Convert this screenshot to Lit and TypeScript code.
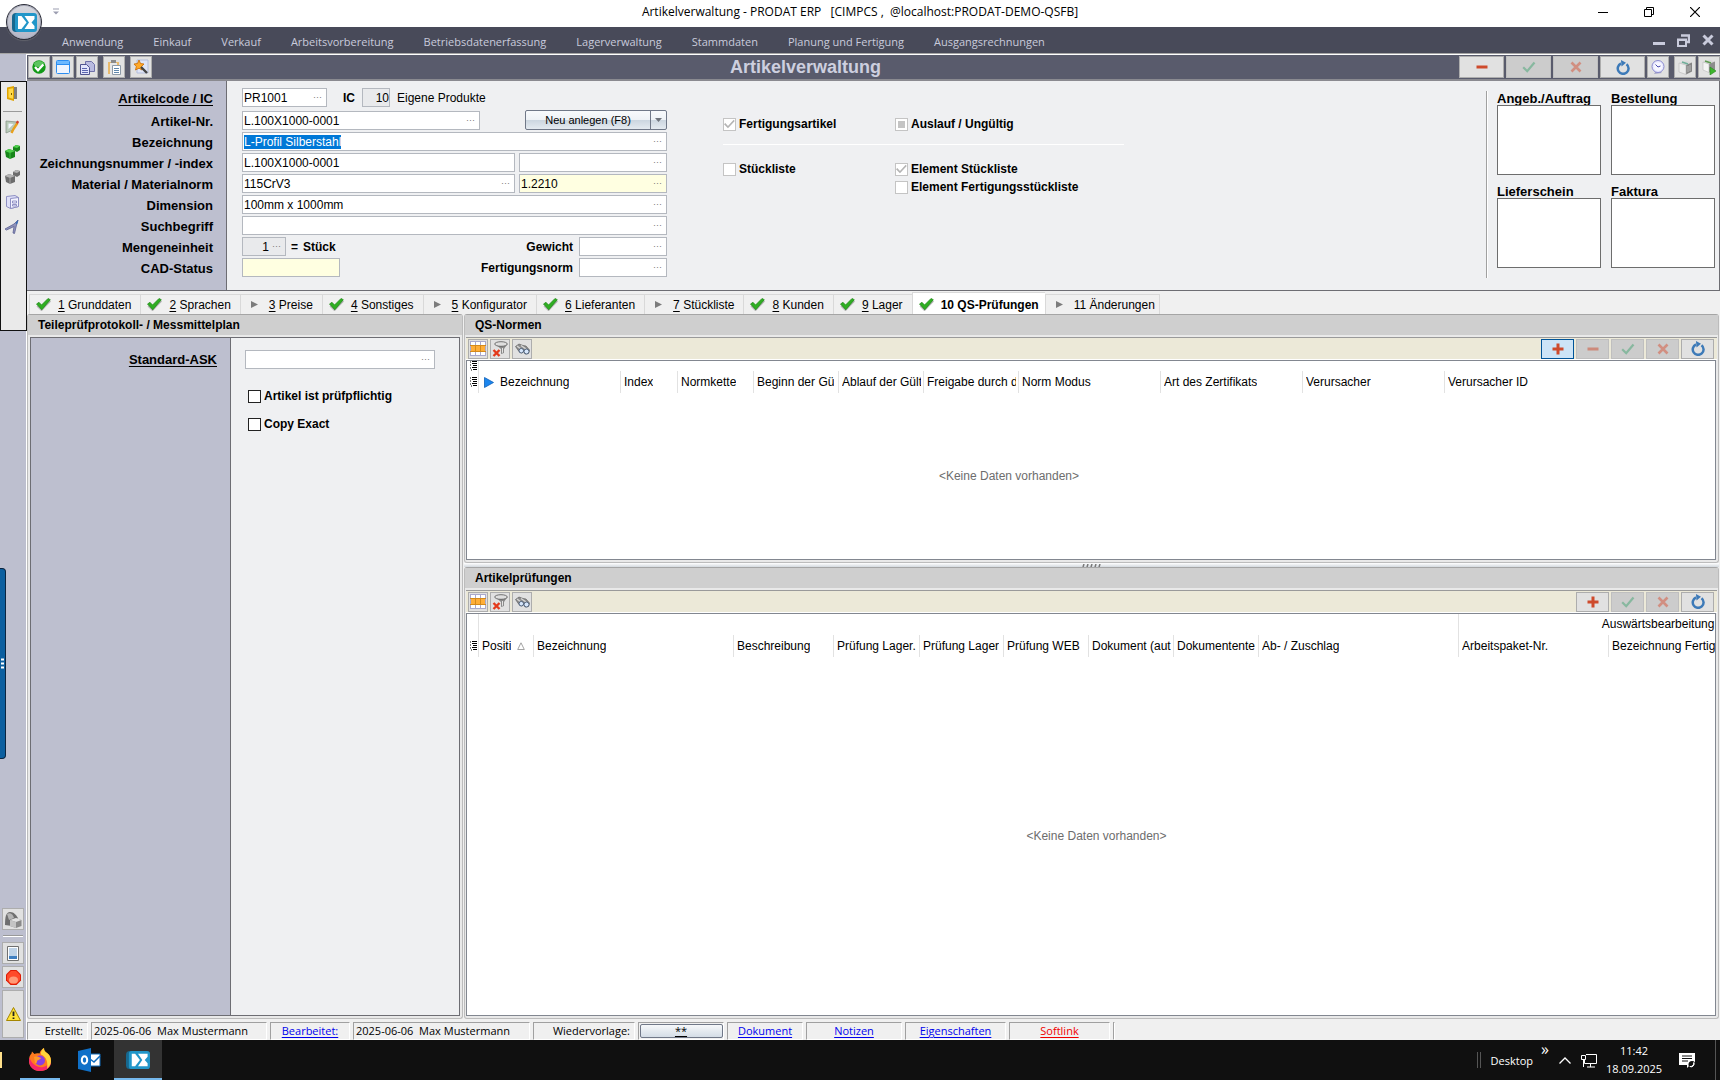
import { LitElement, html, css, svg, nothing } from "lit";
import { customElement, query } from "lit/decorators.js";
import { classMap } from "lit/directives/class-map.js";

const icon = (w: number, h: number, body: unknown, vw = w, vh = h) =>
  html`<svg class="icon" width=${w} height=${h} viewBox="0 0 ${vw} ${vh}" aria-hidden="true">${body}</svg>`;

const icons = {
  brand: (s: number) => icon(s, s, svg`
    <rect x="0" y="3" width="20" height="19" rx="4" fill="#17688f"/>
    <rect x="3" y="3" width="22" height="19" rx="3" fill="#2196c9"/>
    <path d="M6 6h3.500l5 6.500-5 6.500H6z" fill="#fff"/>
    <path d="M12.500 6H22.500v3L19.500 12.500l3 3.500v3h-10l4.500-6.500z" fill="#fff"/>`, 25, 25),
  qat: () => icon(6, 7, svg`<path d="M0 1h6" stroke="#9b9db0" stroke-width="1"/><path d="M0 3.500h6L3 6.500z" fill="#9b9db0"/>`),
  winMin: () => icon(10, 10, svg`<path d="M0 5.500h10" stroke="#000"/>`),
  winMax: () => icon(10, 10, svg`<path d="M.5 2.500h7v7h-7zM2.500 2.500v-2h7v7h-2" fill="none" stroke="#000"/>`),
  winClose: () => icon(10, 10, svg`<path d="M0 0l10 10M10 0L0 10" stroke="#000" stroke-width="1.200"/>`),
  mdiMin: () => icon(12, 12, svg`<path d="M0 9.500h12" stroke="#c9cbdc" stroke-width="3"/>`),
  mdiMax: () => icon(13, 13, svg`<path d="M1 6h8v6H1zM0 5.500h10" fill="none" stroke="#c9cbdc" stroke-width="2"/><path d="M4 1.500h9M12 1v7h-2" fill="none" stroke="#c9cbdc" stroke-width="2.500"/>`),
  mdiClose: () => icon(12, 12, svg`<path d="M1.500 1.500l9 9M10.500 1.500l-9 9" stroke="#c9cbdc" stroke-width="3"/>`),
  ok: () => icon(14, 14, svg`<circle cx="7" cy="7" r="6.700" fill="#129a17"/><ellipse cx="7" cy="4" rx="5" ry="3" fill="#5cc45e"/><path d="M3 7l3 3.200L11.300 4.500" fill="none" stroke="#fff" stroke-width="2.300"/>`),
  win: () => icon(14, 14, svg`<rect x=".5" y=".5" width="13" height="13" rx="1" fill="#eef4ff" stroke="#2b8cf0"/><path d="M1 2.500h12" stroke="#6cb8ff" stroke-width="3"/><path d="M1 4.500h12" stroke="#2b8cf0"/>`),
  copy: () => icon(15, 15, svg`<path d="M5.500 1.500h6l3 3v7h-9z" fill="#b9bbe0" stroke="#6f71a8"/><path d="M.5 4.500h6l3 3v7h-9z" fill="#e3e6fb" stroke="#51558f"/><path d="M2 8.500h5M2 10.500h6M2 12.500h6" stroke="#5c66b0"/>`),
  paste: () => icon(15, 16, svg`<path d="M1 3h11v12H1z" fill="#e8b96c"/><path d="M3 4h7v12H3z" fill="#e7e7e7"/><path d="M4 1h5v3H4z" fill="#8a8a8a"/><path d="M5.500 6.500h8v9h-8z" fill="#fff" stroke="#8d9aa8"/><path d="M7 9.500h5M7 11.500h5M7 13.500h5" stroke="#5f87ad"/>`),
  wizard: () => icon(16, 16, svg`<path d="M4 1h11v13H4z" fill="#dfe5f7" stroke="#b3bddb"/><path d="M6 1l1.500 3.500L11 5 8.500 7.500 9 11 6 9.200 2.500 11l.8-3.500L1 5l3.500-.5z" fill="#ffa928" stroke="#c96a00" stroke-width=".8"/><path d="M8 8l6 6" stroke="#444" stroke-width="2.400"/>`),
  plus: () => icon(12, 12, svg`<path d="M.5 6h11M6 .5v11" stroke="#ce4a2c" stroke-width="3"/>`),
  minus: () => icon(12, 12, svg`<path d="M.5 6h11" stroke="#ce4a2c" stroke-width="3"/>`),
  check: () => icon(14, 12, svg`<path d="M1.200 6.200l4 4L12.500 1.500" fill="none" stroke="#45a573" stroke-width="2.200"/>`),
  cross: () => icon(12, 12, svg`<path d="M1.500 1.500l9 9M10.500 1.500l-9 9" stroke="#d65339" stroke-width="2.600"/>`),
  refresh: () => icon(14, 15, svg`<path d="M10.500 4.200A5.400 5.400 0 1 1 5 3.500" fill="none" stroke="#3d7ab8" stroke-width="2.500"/><path d="M5 0l5 2.800L5.500 6.500z" fill="#3d7ab8"/>`),
  clock: () => icon(14, 15, svg`<path d="M3 14l3-5 5 4z" fill="#a5a5c8"/><circle cx="7" cy="6.500" r="6" fill="#e9e9ff" stroke="#8c8ccf"/><circle cx="7" cy="6.500" r="4" fill="#f8f8ff"/><path d="M7 7L4.500 4.500M7 7l2.500-1" stroke="#4a4ab0"/>`),
  cube: () => icon(15, 15, svg`<path d="M1 3l7-2.500 6 2v9L8 14.500 1 12z" fill="#d9d9d9"/><path d="M8 5l6-2.500v9L8 14.500z" fill="#858585"/><path d="M1 3l7 2v9.500L1 12z" fill="#ececec" stroke="#bbb" stroke-width=".6"/><path d="M4 2l6 2" stroke="#6fae9a" stroke-width="1.500"/><path d="M10 6v6M12 5v6" stroke="#b9b9b9"/>`),
  cubeGo: () => icon(16, 16, svg`<path d="M2 3l6-2.500 6 2v8L8 13.500 2 11z" fill="#d9d9d9"/><path d="M8 5l6-2.500v8.500L8 13.500z" fill="#8c8c8c"/><path d="M2 3l6 2v8.500L2 11z" fill="#f4f4f4" stroke="#bbb" stroke-width=".6"/><path d="M4 2l6 2" stroke="#5d9a50" stroke-width="1.500"/><path d="M9 8l6 4-6 4z" fill="#3db52d" stroke="#26861b" stroke-width=".6"/>`),
  tick: () => icon(15, 13, svg`<path d="M1.500 7.500l4 4L14 2.500" fill="none" stroke="#9a9a9a" stroke-width="2.600" opacity=".7"/><path d="M.5 6L3 4.300 5.500 7 12 .5l2.300 1.200L5.800 11.800z" fill="#2fae22" stroke="#1d8614" stroke-width=".7"/>`),
  arrow: () => icon(15, 9, svg`<path d="M4 1l7 3.500L4 8z" fill="#7c7c7c"/>`),
  door: () => icon(12, 15, svg`<path d="M1 1.500L8 0v15l-7-2z" fill="#e0a400"/><path d="M2.500 3L7 2.200v10.500l-4.500-1.200z" fill="#ffd94a"/><path d="M8 1h3v12H8z" fill="#7e7e7e"/><path d="M5.500 7v2" stroke="#7b5b00"/>`),
  edit: () => icon(14, 14, svg`<path d="M1 1l11 1-4 8-7 3z" fill="#b9cbb9" stroke="#8a988a" stroke-width=".8"/><path d="M3.500 3.500l5 .5-5 5z" fill="#f2f5ff"/><path d="M12.500 3L8.500 9l-2 4" stroke="#e8a11c" stroke-width="2.400" fill="none"/><path d="M11.500 1.500l2 1.500" stroke="#d5432c" stroke-width="2.500"/>`),
  blocks: (a: string, b: string) => icon(15, 14, svg`<path d="M0 6l4-2 6 2v6l-5 2-4-2z" fill=${a}/><path d="M0 6l4-2 6 2-5 2z" fill=${b}/><path d="M8 2l3-2 4 1v4l-3 2-4-2z" fill=${a}/><path d="M8 2l3-2 4 1-3 2z" fill=${b}/><path d="M5 8v6" stroke=${b} stroke-width=".8"/>`),
  safe: () => icon(13, 14, svg`<path d="M.5 1.500L9 .5l3.500 2v9l-8 2-4-2z" fill="#dfe0f8" stroke="#8687bd" stroke-width=".9"/><path d="M4.500 3.500l8-1v9l-8 2z" fill="#f3f3ff" stroke="#8687bd" stroke-width=".9"/><path d="M6.500 6h4v2h-4zM6.500 9.500h4v1.500h-4z" fill="none" stroke="#7b7cb8" stroke-width=".8"/>`),
  compass: () => icon(14, 14, svg`<path d="M13 0L9 4 0 9l1.500 1L9 6.500 8 13l1.500.5L11.500 5z" fill="#8f93bb" stroke="#595e92" stroke-width=".8"/><path d="M13.500 0l-3 3 1.500 1.500z" fill="#2f6bb8"/>`),
  shapes: () => icon(18, 17, svg`<path d="M1 14C1 6 2 1 6 1s6 3 8 6l-6 8z" fill="#6f6f6f"/><path d="M3 3c3-2 6 0 7 4L5 9z" fill="#b5b5b5"/><path d="M6 9l6-2 5.500 2v6L12 17l-6-2z" fill="#8a8a8a"/><path d="M6 9l6-2 5.500 2-5.500 2z" fill="#e2e2e2"/><path d="M6 9l6 2v6l-6-2z" fill="#c4c4c4"/>`),
  list: () => icon(12, 15, svg`<path d="M.5.5h11v14H.5z" fill="#fff" stroke="#707070"/><path d="M2 3h8M2 5h8M2 7h8M2 9h8" stroke="#7fa6cf"/><path d="M2 10h8v3H2z" fill="#3f7fc0"/>`),
  stop: () => icon(15, 15, svg`<path d="M4.500 0h6L15 4.500v6L10.500 15h-6L0 10.500v-6z" fill="#dd1c05"/><path d="M5 1h5l4 4v5l-4 4H5l-4-4V5z" fill="#ff4a2a"/><ellipse cx="7.500" cy="10" rx="4.500" ry="3.500" fill="#ff9a78"/>`),
  warn: () => icon(15, 14, svg`<path d="M7.500.5L14.500 13.500H.5z" fill="#ffe23a" stroke="#a58600"/><path d="M7.500 4.500v4.500M7.500 10.500v1.500" stroke="#222" stroke-width="1.800"/>`),
  grid: () => icon(16, 15, svg`<path d="M0 0h16v15H0z" fill="#fff"/><path d="M0 5h16v5H0z" fill="#ffae38"/><path d="M0 .5h16M0 4.500h16M0 10.500h16M0 14.500h16M.5 0v15M5.500 0v15M10.500 0v15M15.500 0v15" stroke="#a9a9cc"/><path d="M5.500 5v5M10.500 5v5M0 4.500h16M0 10.500h16" stroke="#d48a1c"/>`),
  filter: () => icon(16, 16, svg`<path d="M3 3l6 5v5l3-1V8l3.500-5z" fill="#8a8a8a"/><path d="M10 7v5l1-.5V7z" fill="#e5e5e5"/><ellipse cx="9" cy="3" rx="6.300" ry="2.300" fill="#dedede" stroke="#555" stroke-width=".8"/><path d="M1.500 9l6 6M7.500 9l-6 6" stroke="#e33a1c" stroke-width="2.400"/>`),
  find: () => icon(15, 12, svg`<path d="M.5 3.500L4 1l4 1.500L11 3l3.500 4-1 3.500-3.500.5L8.500 8l-2 2L4 8.500z" fill="#8d8d8d" stroke="#555" stroke-width=".6"/><path d="M2 3l4 3M6 2.500l5 3.500" stroke="#d8d8d8" stroke-width="1.300"/><circle cx="6.300" cy="7.700" r="2.300" fill="#d6e6fb" stroke="#51637c"/><circle cx="11.500" cy="8.500" r="2.500" fill="#d6e6fb" stroke="#51637c"/>`),
  rows: () => icon(7, 10, svg`<path d="M0 1h1M0 4h1M0 7h1M1 9h1M2 .5h5M2 2.500h5M3 4.500h4M2 6.500h5M3 8.500h4" stroke="#000"/>`),
  play: () => icon(10, 11, svg`<path d="M.5.500L9.500 5.500l-9 5z" fill="#1c86ee" stroke="#0d5fb8" stroke-width=".8"/>`),
  sort: () => icon(8, 8, svg`<path d="M4 .8L7.300 7.500H.7z" fill="none" stroke="#9a9a9a" stroke-width=".9"/>`),
  down: () => icon(7, 4, svg`<path d="M0 0h7L3.500 4z" fill="#6f747c"/>`),
  grip: () => icon(19, 3, svg`<path d="M1 3L2 0M5 3L6 0M9 3l1-3M13 3l1-3M17 3l1-3" stroke="#777" stroke-width="1.500"/>`),
  firefox: () => icon(24, 24, svg`
    <path d="M12 23C5.500 23 1 18.500 1 12.500 1 9 2 7 3.500 5.500L4 3.500 6.500 6c1-.8 3-1 5-.5C12 3 14 1 16 0c0 2.500 1 3.500 3 5s4 4 4 8c0 6-4.500 10-11 10z" fill="#ff7a1f"/>
    <path d="M12 23C5.500 23 1 18.500 1 12.500c0-1 .1-2 .3-3C4 17 10 20 15 19s6.500-4 7.500-8c2 6-2 12-10.500 12z" fill="#f5286a"/>
    <path d="M16 0c0 2.500 1 3.500 3 5s4 4 4 8c0 3-1.500 6-4 7.500C20 15 19 9 13 6.500 12.500 4 14 1 16 0z" fill="#ffd43a"/>
    <circle cx="12" cy="12.500" r="5" fill="#8a3fe0"/><path d="M6 9c3-1 5 0 7 1-1 2-4 2-4 3.500S8 16 7 15z" fill="#ff9a2a"/>`),
  outlook: () => icon(24, 24, svg`
    <path d="M10 6h13v12H10z" fill="#fff"/><path d="M10 6h13v12H10" fill="none" stroke="#0f6cbd"/><path d="M13 11l4 3 6-6" fill="none" stroke="#0f6cbd" stroke-width="1.500"/>
    <path d="M1 3l13-3v24L1 21z" fill="#0f70c8"/><ellipse cx="7.500" cy="12" rx="2.700" ry="3.700" fill="none" stroke="#fff" stroke-width="2"/>`),
  chevUp: () => icon(12, 7, svg`<path d="M.5 6.500L6 1l5.500 5.500" fill="none" stroke="#fff" stroke-width="1.300"/>`),
  net: () => icon(16, 14, svg`<path d="M5 .5h10.500v9H3.500V6M9.500 10v3M6 13h8M2.500 6v7" fill="none" stroke="#fff"/><path d="M.5 1.500h4v4h-4z" fill="#101010" stroke="#fff"/>`),
  note: () => icon(17, 17, svg`<path d="M0 1h16v12h-5l-3 3v-3H0z" fill="#fff"/><path d="M3 4h10M3 6.500h10M3 9h6" stroke="#101010"/><circle cx="13" cy="12.500" r="3.500" fill="#101010"/><path d="M10.800 14.500a3 3 0 0 0 4-4 3.500 3.500 0 0 1-4 4z" fill="#fff" stroke="#fff"/>`),
};

const MENU = ["Anwendung", "Einkauf", "Verkauf", "Arbeitsvorbereitung", "Betriebsdatenerfassung", "Lagerverwaltung", "Stammdaten", "Planung und Fertigung", "Ausgangsrechnungen"];

const TABS: { n: string; t: string; done: boolean; active?: boolean }[] = [
  { n: "1", t: "Grunddaten", done: true },
  { n: "2", t: "Sprachen", done: true },
  { n: "3", t: "Preise", done: false },
  { n: "4", t: "Sonstiges", done: true },
  { n: "5", t: "Konfigurator", done: false },
  { n: "6", t: "Lieferanten", done: true },
  { n: "7", t: "Stückliste", done: false },
  { n: "8", t: "Kunden", done: true },
  { n: "9", t: "Lager", done: true },
  { n: "10", t: "QS-Prüfungen", done: true, active: true },
  { n: "11", t: "Änderungen", done: false },
];

const LABELS: [string, string][] = [
  ["code", "Artikelcode / IC"],
  ["nr", "Artikel-Nr."],
  ["bez", "Bezeichnung"],
  ["zeich", "Zeichnungsnummer / -index"],
  ["mat", "Material / Materialnorm"],
  ["dim", "Dimension"],
  ["such", "Suchbegriff"],
  ["me", "Mengeneinheit"],
  ["cad", "CAD-Status"],
];

const NORM_COLS: [string, number][] = [
  ["Bezeichnung", 142], ["Index", 57], ["Normkette", 76], ["Beginn der Gü", 85], ["Ablauf der Gült", 85],
  ["Freigabe durch d", 95], ["Norm Modus", 142], ["Art des Zertifikats", 142], ["Verursacher", 142], ["Verursacher ID", 96],
];

const TEST_COLS: [string, number][] = [
  ["Positi", 55], ["Bezeichnung", 200], ["Beschreibung", 100], ["Prüfung Lager.", 86], ["Prüfung Lager", 84],
  ["Prüfung WEB", 85], ["Dokument (aut", 85], ["Dokumentente", 85], ["Ab- / Zuschlag", 200],
  ["Arbeitspaket-Nr.", 150], ["Bezeichnung Fertig", 246],
];

type Cmd = "plus" | "minus" | "check" | "cross" | "refresh";
const CMD_NAMES: Record<Cmd, string> = { plus: "Neu", minus: "Löschen", check: "Speichern", cross: "Abbrechen", refresh: "Aktualisieren" };

@customElement("app-root")
export class AppRoot extends LitElement {
  @query("#bez") private nameInput!: HTMLInputElement;

  firstUpdated() {
    this.nameInput.focus();
    this.nameInput.select();
  }

  static styles = css`
    :host { display: block; font: 12px/16px "Liberation Sans", Arial, sans-serif; color: #000; }
    * { box-sizing: border-box; }
    button, input { font: inherit; color: inherit; margin: 0; }
    button { padding: 0; border: 0; background: none; display: flex; align-items: center; justify-content: center; }
    .icon { display: block; flex: none; }
    .app { display: flex; flex-direction: column; height: 100vh; min-height: 720px; overflow: hidden; background: #f0f0f0; position: relative; }
    .ui { font-family: "Open Sans", "Noto Sans", sans-serif; }

    .titlebar { display: grid; grid-template-columns: 1fr auto 1fr; align-items: center; height: 27px; background: #fff; flex: none; padding: 0 20px 4px; }
    .titlebar > span { padding-left: 33px; }
    .titlebar h1 { margin: 0; font-size: 12px; font-weight: 400; white-space: pre; }
    .wincmds { display: flex; justify-content: flex-end; gap: 36px; }
    .orb { position: absolute; left: 6px; top: 4px; width: 36px; height: 36px; border-radius: 50%; border: 1px solid #2a2c38; background: linear-gradient(#d8d9df, #b3b5c6); box-shadow: inset 0 0 0 1px #a9abba, 0 1px 1px #8886; }

    .menubar { display: flex; align-items: center; height: 27px; flex: none; padding: 0 6px 0 62px; background: #484a59; border-bottom: 1px solid #a5a5a5; color: #c9cbdc; }
    .menubar nav { display: flex; gap: 30px; flex: 1; font-size: 11px; padding-top: 4px; }
    .menubar a { color: inherit; text-decoration: none; white-space: nowrap; }
    .mdicmds { display: flex; gap: 12px; }

    .work { display: flex; flex: 1; min-height: 0; }
    .rail { width: 26px; flex: none; background: #bdbfcf; display: flex; flex-direction: column; align-items: center; justify-content: space-between; padding: 27px 0 2px; position: relative; }
    .tools { width: 27px; height: 250px; background: #eaeaea; border: 1px solid #111; display: flex; flex-direction: column; align-items: center; gap: 11px; padding: 4px 2px 0 0; z-index: 1; }
    .tools hr { width: 19px; border: 0; border-top: 1px solid #9a9a9a; margin: -1px 0 -3px; }
    .dock { display: flex; flex-direction: column; gap: 2px; }
    .dock hr { width: 20px; margin: 3px 1px; border: 0; border-top: 1px solid #999; border-bottom: 1px solid #fff; }
    .dock button { width: 22px; height: 22px; background: #e1e1e1; border: 1px solid #adadad; }
    .dock .tall { height: 48px; }
    .flap { position: absolute; left: 0; top: 514px; width: 6px; height: 191px; border: 1px solid #0a2540; border-left: 0; border-radius: 0 4px 4px 0; background: #0c5f9f; z-index: 2; color: #fff; }

    .main { flex: 1; min-width: 0; display: flex; flex-direction: column; border-left: 1px solid #fff; border-top: 1px solid #fff; }
    .head { display: flex; align-items: center; height: 26px; flex: none; background: #595b6c; padding: 0 0 0 1px; border-bottom: 2px solid #8a8a90; }
    .head h2 { flex: 1; margin: 0; text-align: center; font-size: 18px; line-height: 22px; color: #cdcfdf; }
    .group { display: flex; gap: 2px; }
    .group.spaced { gap: 5px; }
    .tb { width: 22px; height: 22px; background: #e1e1e1; border: 1px solid #adadad; }
    .tb.small { width: 20px; height: 20px; }
    .tb.cmd { width: 45px; }
    .tb.cmd.narrow { width: 33px; height: 20px; }
    .tb:disabled { background: #ccc; border-color: #bfbfbf; }
    .tb:disabled .icon { opacity: .5; }
    .tb.hot { background: #cce4f7; border-color: #005499; }

    .form { display: flex; height: 210px; flex: none; border-bottom: 1px solid #6d6d73; border-right: 1px solid #6d6d73; background: #eff0f2; }
    .labels { width: 200px; flex: none; background: #bdbfcf; border-right: 1px solid #6d6d73; padding: 7px 13px 0 0; display: flex; flex-direction: column; align-items: flex-end; }
    .labels label { font-size: 13px; font-weight: 700; line-height: 21px; white-space: nowrap; }
    .labels label.link { text-decoration: underline; text-underline-offset: 2px; margin-bottom: 2px; }
    .fields { padding: 6px 0 0 15px; width: 440px; flex: none; }
    .row { display: flex; align-items: center; height: 21px; gap: 4px; }
    .row.first { margin-bottom: 2px; gap: 7px; }
    .row b { white-space: nowrap; }
    .row .ic { padding-left: 9px; }
    .row .unit { padding-left: 1px; }
    .row .push { padding-right: 2px; }
    .box { display: flex; align-items: center; height: 19px; background: #fff; border: 1px solid #b4b8bf; min-width: 0; }
    .box input { flex: 1; min-width: 0; width: 0; height: 17px; border: 0; background: none; outline: 0; padding: 0 0 0 1px; }
    .box input::selection { background: #0078d7; color: #fff; }
    .box button { width: 15px; height: 15px; margin-right: 1px; flex: none; color: #777; font-size: 9px; line-height: 9px; }
    .box.ro { background: #e9eaec; }
    .box.yellow { background: #ffffe1; }
    .box.right input { text-align: right; }
    .w28 { width: 28px; } .w44 { width: 44px; } .w85 { width: 85px; } .w88 { width: 88px; } .w98 { width: 98px; } .w148 { width: 148px; } .w238 { width: 238px; } .w190 { width: 190px; }
    .grow { flex: 1; }
    .push { margin-left: auto; }
    .split { display: flex; align-self: flex-start; margin-left: auto; width: 142px; height: 20px; border: 1px solid #707888; border-radius: 2px; background: linear-gradient(#f8fafc 0%, #eef2f6 48%, #ccd6e0 52%, #e4eaf0 100%); font-size: 11px; }
    .split button:first-child { flex: 1; border-right: 1px solid #707888; }
    .split button:last-child { width: 15px; }

    .flags { margin: 36px 0 0 56px; flex: 1; min-width: 0; }
    .flags > div { display: grid; grid-template-columns: 172px 1fr; row-gap: 4px; width: 401px; max-width: 100%; }
    .flags > div + div { border-top: 1px solid #fff; margin-top: 13px; padding-top: 17px; }
    .flag { display: flex; align-items: center; gap: 3px; font-weight: 700; height: 14px; white-space: nowrap; }
    .flag input { appearance: none; width: 13px; height: 13px; border: 1px solid #222; background: #fff; display: grid; place-items: center; flex: none; }
    .flag input:disabled { border-color: #c4c4c4; }
    .flag input:checked::before { content: ""; width: 11px; height: 11px; background: #b4b4b4; clip-path: polygon(0 52%, 12% 42%, 36% 68%, 88% 12%, 98% 22%, 36% 88%); }
    .flag input:indeterminate::before { content: ""; width: 7px; height: 7px; background: #c4c4c4; }

    .refs { display: grid; grid-template-columns: 104px 104px; gap: 9px 10px; margin: 10px 4px 12px 0; padding: 0 0 0 10px; border-left: 1px solid #a0a0a0; box-shadow: inset 1px 0 #fff; align-content: start; flex: none; }
    .refs div { display: flex; flex-direction: column; }
    .refs label { font-size: 13px; line-height: 14px; height: 14px; padding-top: 1px; font-weight: 700; }
    .refs textarea { height: 70px; width: 104px; border: 1px solid #6d6d6d; background: #fff; resize: none; display: block; }

    .tabs { display: flex; align-items: flex-end; height: 23px; flex: none; padding-left: 2px; }
    .tab { height: 20px; padding: 0 9px 0 6px; gap: 7px; border: 1px solid #d9d9d9; border-right-width: 0; border-bottom: 0; white-space: nowrap; background: #f0f0f0; }
    .tab:last-child { border-right-width: 1px; padding-right: 4px; }
    .tab.active { background: #fff; height: 22px; padding: 2px 6px 0; font-weight: 700; }
    .tab u { text-underline-offset: 2px; }

    .panes { flex: 1; min-height: 0; display: grid; grid-template-columns: 436px minmax(0, 1fr); gap: 1px; padding-right: 1px; }
    .stack { display: flex; flex-direction: column; min-height: 0; min-width: 0; }
    .panel { display: flex; flex-direction: column; border: 1px solid #bcbcbc; border-top-color: #a5a5a5; border-radius: 3px; background: #e9e9e9; min-height: 0; min-width: 0; }
    .panel h3 { margin: 0; height: 20px; line-height: 20px; font-size: 12px; background: #cfcfcf; padding-left: 10px; flex: none; }
    .panel.top { flex: none; height: 249px; }
    .panel.rest { flex: 1; }
    .plan { margin: 2px; flex: 1; display: flex; border: 1px solid #6d6d73; background: #eff0f2; }
    .plan .side { width: 200px; background: #bdbfcf; border-right: 1px solid #6d6d73; text-align: right; padding: 12px 13px 0 0; }
    .side label { font-size: 13px; line-height: 20px; font-weight: 700; text-decoration: underline; text-underline-offset: 2px; }
    .plan .body { padding: 12px 0 0 14px; display: flex; flex-direction: column; }
    .plan .flag { margin: 20px 0 0 3px; }
    .plan .flag + .flag { margin-top: 14px; }
    .splitter { height: 4px; flex: none; display: flex; align-items: center; justify-content: center; background: linear-gradient(#fff, #d3d9de); }

    .gridwrap { margin: 2px 1px; flex: 1; min-height: 0; display: flex; flex-direction: column; }
    .gridbar { height: 23px; flex: none; display: flex; align-items: center; justify-content: space-between; background: #ece9d8; border-top: 1px solid #9a9a9a; border-bottom: 1px solid #fff; padding: 0 3px 0 2px; }
    .gridbox { flex: 1; min-height: 0; margin-right: 1px; border: 1px solid #828790; background: #fff; overflow: hidden; display: flex; flex-direction: column; }
    table { border-collapse: separate; border-spacing: 0; table-layout: fixed; flex: none; width: 0; }
    th { font-weight: 400; text-align: left; padding: 0 0 0 3px; border-left: 1px solid #e2e2e2; white-space: nowrap; overflow: hidden; height: 22px; line-height: 20px; }
    .clip { overflow: hidden; margin-right: 2px; display: flex; align-items: center; gap: 6px; }
    .clip.lead { padding-left: 2px; }
    .clip span { overflow: hidden; }
    th.mark { border-left: 0; padding: 0 0 0 3px; }
    tr.band th { height: 10px; line-height: 10px; border-left-color: transparent; padding-top: 0; padding-bottom: 0; }
    tr.band th.line { border-left-color: #e2e2e2; }
    .tests th { height: 22px; line-height: 22px; }
    .tests tr.band th { height: 21px; line-height: 21px; }
    th.center { text-align: center; }
    .empty { flex: 1; display: flex; align-items: center; justify-content: center; color: #6d6d6d; padding-left: 11px; }
    .empty.cols { max-width: 1073px; }

    .status { display: flex; gap: 3px; height: 21px; padding-top: 3px; flex: none; font-size: 11px; line-height: 16px; }
    .cell { border-top: 1px solid #a0a0a0; border-left: 1px solid #a0a0a0; border-right: 1px solid #fff; border-bottom: 1px solid #fff; display: flex; align-items: center; justify-content: center; white-space: pre; flex: none; }
    .cell.start { justify-content: flex-start; padding-left: 2px; }
    .cell.end { justify-content: flex-end; padding-right: 4px; }
    .cell a { color: #0000ee; text-underline-offset: 2px; }
    .cell a.red { color: #f00000; }
    .cell button { width: 83px; height: 14px; border: 1px solid #707888; border-radius: 2px; background: linear-gradient(#f6f8fa, #d4dde6); text-decoration: underline; }
    .c61 { width: 61px; } .c176 { width: 176px; } .c80 { width: 80px; } .c177 { width: 177px; } .c103 { width: 102px; } .c86 { width: 86px; } .c76 { width: 76px; } .c96 { width: 96px; } .c102 { width: 101px; } .c101 { width: 101px; }

    .taskbar { height: 40px; flex: none; background: #101010; color: #fff; display: flex; align-items: stretch; justify-content: space-between; }
    .apps, .tray { display: flex; align-items: center; }
    .apps button { height: 40px; width: 40px; border-bottom: 2px solid #76b9ed; padding-top: 2px; }
    .apps .sliver { width: 2px; height: 16px; background: #ffe08a; margin-right: 18px; }
    .apps .idle { border-color: transparent; margin: 0 5px 0 9px; }
    .apps .idle + button { width: 48px; background: #333; }
    .tray { font-size: 11px; line-height: 17px; }
    .tray .bars { width: 4px; height: 16px; border: 1px solid #555; border-width: 0 1px; margin-right: 10px; }
    .tray .more { margin: 0 10px 22px 8px; font-size: 16px; line-height: 14px; height: 14px; }
    .tray .net { margin: 2px 9px 0 10px; }
    .tray time { text-align: center; width: 56px; display: block; line-height: 18px; white-space: nowrap; }
    .tray .note { margin: 0 19px 0 17px; }
    .tray .edge { width: 5px; height: 40px; border-left: 1px solid #555; }
  `;

  private box(id: string, value: string, cls: string, label = "", dots = true, readonly = false) {
    return html`<div class="box ${cls}">
      <input id=${id} type="text" .value=${value} aria-label=${label || nothing} ?readonly=${readonly}>
      ${dots ? html`<button type="button" tabindex="-1" aria-label="Auswählen">···</button>` : nothing}
    </div>`;
  }

  private cmd(kind: Cmd, cls = "", disabled = false) {
    return html`<button class="tb cmd ${cls}" aria-label=${CMD_NAMES[kind]} ?disabled=${disabled}>${icons[kind]()}</button>`;
  }

  private tool(pic: unknown, name: string, cls = "") {
    return html`<button class="tb ${cls}" aria-label=${name}>${pic}</button>`;
  }

  private gridTools() {
    return html`<div class="group">
      ${this.tool(icons.grid(), "Spalten", "small")}
      ${this.tool(icons.filter(), "Filter löschen", "small")}
      ${this.tool(icons.find(), "Suchen", "small")}
    </div>`;
  }

  private flag(label: string, state: { on?: boolean; mixed?: boolean; off?: boolean } = {}) {
    return html`<label class="flag"><input type="checkbox" .checked=${!!state.on} .indeterminate=${!!state.mixed} ?disabled=${!!state.off}>${label}</label>`;
  }

  private renderForm() {
    return html`<section class="form">
      <div class="labels">
        ${LABELS.map(([id, t], i) => html`<label for=${id} class=${classMap({ link: i === 0 })}>${t}</label>`)}
      </div>
      <div class="fields">
        <div class="row first">
          ${this.box("code", "PR1001", "w85")}
          <b class="ic"><label for="ic">IC</label></b>
          ${this.box("ic", "10", "w28 ro right", "", false, true)}
          <span>Eigene Produkte</span>
        </div>
        <div class="row">
          ${this.box("nr", "L.100X1000-0001", "w238")}
          <div class="split"><button>Neu anlegen (F8)</button><button aria-label="Weitere Optionen">${icons.down()}</button></div>
        </div>
        <div class="row">${this.box("bez", "L-Profil Silberstahl", "grow")}</div>
        <div class="row">${this.box("zeich", "L.100X1000-0001", "grow", "", false)}${this.box("zindex", "", "w148", "Zeichnungsindex")}</div>
        <div class="row">${this.box("mat", "115CrV3", "grow")}${this.box("norm", "1.2210", "w148 yellow", "Materialnorm")}</div>
        <div class="row">${this.box("dim", "100mm x 1000mm", "grow")}</div>
        <div class="row">${this.box("such", "", "grow")}</div>
        <div class="row">
          ${this.box("me", "1", "w44 ro right")}
          <b class="unit">=</b><b class="unit">Stück</b>
          <b class="push"><label for="gew">Gewicht</label></b>${this.box("gew", "", "w88")}
        </div>
        <div class="row">
          ${this.box("cad", "", "w98 yellow", "", false)}
          <b class="push"><label for="fnorm">Fertigungsnorm</label></b>${this.box("fnorm", "", "w88")}
        </div>
      </div>
      <div class="flags">
        <div>${this.flag("Fertigungsartikel", { on: true, off: true })}${this.flag("Auslauf / Ungültig", { mixed: true, off: true })}</div>
        <div>${this.flag("Stückliste", { off: true })}${this.flag("Element Stückliste", { on: true, off: true })}
          <span></span>${this.flag("Element Fertigungsstückliste", { off: true })}</div>
      </div>
      <div class="refs">
        ${["Angeb./Auftrag", "Bestellung", "Lieferschein", "Faktura"].map((t, i) => html`<div><label for="ref${i}">${t}</label><textarea id="ref${i}" readonly></textarea></div>`)}
      </div>
    </section>`;
  }

  private renderNorms() {
    return html`<section class="panel top">
      <h3>QS-Normen</h3>
      <div class="gridwrap">
        <div class="gridbar">${this.gridTools()}
          <div class="group">${this.cmd("plus", "narrow hot")}${this.cmd("minus", "narrow", true)}${this.cmd("check", "narrow", true)}${this.cmd("cross", "narrow", true)}${this.cmd("refresh", "narrow")}</div>
        </div>
        <div class="gridbox">
          <table>
            <colgroup><col style="width:11px">${NORM_COLS.map(([, w]) => html`<col style="width:${w}px">`)}</colgroup>
            <thead>
              <tr class="band"><th class="mark">${icons.rows()}</th><th class="line" colspan="10"></th></tr>
              <tr><th class="mark">${icons.rows()}</th>
                ${NORM_COLS.map(([t], i) => html`<th scope="col"><div class=${classMap({ clip: true, lead: i === 0 })}>${i === 0 ? icons.play() : nothing}<span>${t}</span></div></th>`)}</tr>
            </thead>
          </table>
          <div class="empty cols">&lt;Keine Daten vorhanden&gt;</div>
        </div>
      </div>
    </section>`;
  }

  private renderTests() {
    return html`<section class="panel rest">
      <h3>Artikelprüfungen</h3>
      <div class="gridwrap">
        <div class="gridbar">${this.gridTools()}
          <div class="group">${this.cmd("plus", "narrow")}${this.cmd("check", "narrow", true)}${this.cmd("cross", "narrow", true)}${this.cmd("refresh", "narrow")}</div>
        </div>
        <div class="gridbox">
          <table class="tests">
            <colgroup><col style="width:11px">${TEST_COLS.map(([, w]) => html`<col style="width:${w}px">`)}</colgroup>
            <thead>
              <tr class="band"><th class="mark"></th><th class="line" colspan="9"></th><th class="line center" colspan="2">Auswärtsbearbeitung</th></tr>
              <tr><th class="mark">${icons.rows()}</th>
                ${TEST_COLS.map(([t], i) => html`<th scope="col"><div class="clip"><span>${t}</span>${i === 0 ? icons.sort() : nothing}</div></th>`)}</tr>
            </thead>
          </table>
          <div class="empty">&lt;Keine Daten vorhanden&gt;</div>
        </div>
      </div>
    </section>`;
  }

  render() {
    return html`<div class="app">
      <header class="titlebar ui">
        <span>${icons.qat()}</span>
        <h1>Artikelverwaltung - PRODAT ERP   [CIMPCS ,  @localhost:PRODAT-DEMO-QSFB]</h1>
        <div class="wincmds">
          <button aria-label="Minimieren">${icons.winMin()}</button>
          <button aria-label="Verkleinern">${icons.winMax()}</button>
          <button aria-label="Schließen">${icons.winClose()}</button>
        </div>
      </header>
      <div class="menubar ui">
        <nav>${MENU.map((m) => html`<a href="#">${m}</a>`)}</nav>
        <div class="mdicmds">
          <button aria-label="Fenster minimieren">${icons.mdiMin()}</button>
          <button aria-label="Fenster wiederherstellen">${icons.mdiMax()}</button>
          <button aria-label="Fenster schließen">${icons.mdiClose()}</button>
        </div>
      </div>
      <button class="orb" aria-label="PRODAT">${icons.brand(25)}</button>

      <div class="work">
        <aside class="rail">
          <div class="tools">
            <button aria-label="Beenden">${icons.door()}</button><hr>
            <button aria-label="Bearbeiten">${icons.edit()}</button>
            <button aria-label="Artikel">${icons.blocks("#17851a", "#4fd04c")}</button>
            <button aria-label="Baugruppen">${icons.blocks("#6c6c6c", "#b4b4b4")}</button>
            <button aria-label="Ablage">${icons.safe()}</button>
            <button aria-label="Konstruktion">${icons.compass()}</button>
          </div>
          <button class="flap" aria-label="Leiste einblenden">${icon(3, 12, svg`<path d="M0 1.500h3M0 5.500h3M0 9.500h3" stroke="#fff" stroke-width="2"/>`)}</button>
          <div class="dock">
            <button aria-label="Formen">${icons.shapes()}</button><hr>
            <button aria-label="Liste">${icons.list()}</button>
            <button aria-label="Stopp">${icons.stop()}</button>
            <button class="tall" aria-label="Warnung">${icons.warn()}</button>
          </div>
        </aside>

        <main class="main">
          <div class="head">
            <div class="group spaced">
              <div class="group">${this.tool(icons.ok(), "OK")}${this.tool(icons.win(), "Fenster")}${this.tool(icons.copy(), "Kopieren")}</div>
              ${this.tool(icons.paste(), "Einfügen")}${this.tool(icons.wizard(), "Assistent")}
            </div>
            <h2>Artikelverwaltung</h2>
            <div class="group spaced">
              <div class="group">${this.cmd("minus")}${this.cmd("check", "", true)}${this.cmd("cross", "", true)}${this.cmd("refresh")}${this.tool(icons.clock(), "Verlauf")}</div>
              <div class="group">${this.tool(icons.cube(), "Lager")}${this.tool(icons.cubeGo(), "Buchen")}</div>
            </div>
          </div>
          ${this.renderForm()}
          <div class="tabs" role="tablist">
            ${TABS.map((t) => html`<button role="tab" aria-selected=${t.active ? "true" : "false"} class=${classMap({ tab: true, active: !!t.active })}>
              ${t.done ? icons.tick() : icons.arrow()}<span>${t.n.length === 1 ? html`<u>${t.n}</u>` : t.n} ${t.t}</span></button>`)}
          </div>
          <div class="panes">
            <section class="panel">
              <h3>Teileprüfprotokoll- / Messmittelplan</h3>
              <div class="plan">
                <div class="side"><label for="ask">Standard-ASK</label></div>
                <div class="body">
                  ${this.box("ask", "", "w190")}
                  ${this.flag("Artikel ist prüfpflichtig")}
                  ${this.flag("Copy Exact")}
                </div>
              </div>
            </section>
            <div class="stack">
              ${this.renderNorms()}
              <div class="splitter">${icons.grip()}</div>
              ${this.renderTests()}
            </div>
          </div>
          <footer class="status ui">
            <div class="cell end c61">Erstellt:</div>
            <div class="cell start c176">2025-06-06  Max Mustermann</div>
            <div class="cell c80"><a href="#">Bearbeitet:</a></div>
            <div class="cell start c177">2025-06-06  Max Mustermann</div>
            <div class="cell end c103">Wiedervorlage:</div>
            <div class="cell c86"><button>**</button></div>
            <div class="cell c76"><a href="#">Dokument</a></div>
            <div class="cell c96"><a href="#">Notizen</a></div>
            <div class="cell c102"><a href="#">Eigenschaften</a></div>
            <div class="cell c101"><a class="red" href="#">Softlink</a></div>
            <div class="cell grow"></div>
          </footer>
        </main>
      </div>

      <div class="taskbar ui">
        <div class="apps">
          <span class="sliver"></span>
          <button aria-label="Firefox">${icons.firefox()}</button>
          <button class="idle" aria-label="Outlook">${icons.outlook()}</button>
          <button aria-label="PRODAT ERP">${icons.brand(24)}</button>
        </div>
        <div class="tray">
          <span class="bars"></span><span>Desktop</span><span class="more">»</span>
          <button aria-label="Ausgeblendete Symbole">${icons.chevUp()}</button>
          <span class="net">${icons.net()}</span>
          <time datetime="2025-09-18T11:42">11:42<br>18.09.2025</time>
          <span class="note">${icons.note()}</span>
          <span class="edge"></span>
        </div>
      </div>
    </div>`;
  }
}
